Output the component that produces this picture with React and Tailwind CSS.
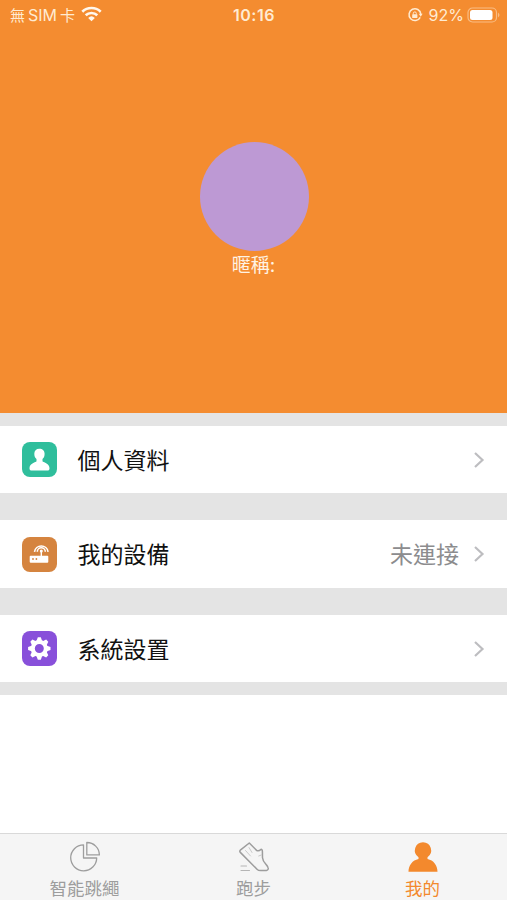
import React from 'react';

const Chevron = () => (
  <svg className="ml-[14px] mt-px h-[18px] w-[12px] shrink-0" viewBox="0 0 12 18" fill="none" stroke="#bdbdc0" strokeWidth="2.2">
    <path d="M2 2 9.5 9 2 16" />
  </svg>
);

const PersonIcon = () => (
  <svg className="h-full w-full" viewBox="0 0 35 35" fill="#fff">
    <path d="M17.3 6.700c-3.200 0-5 2-5 5 0 2.400.8 4.200 2.200 5.300v2.300c-.5 1-6.700 1.900-7 6.600-.1 2 .8 2.600 2.300 2.600h15.500c1.500 0 2.300-.7 2.200-2.600-.3-4.700-6.400-5.600-7-6.600V17c1.400-1.100 2.100-2.900 2.100-5.300 0-3-2-5-5.300-5z" />
  </svg>
);

const RouterIcon = () => (
  <svg className="h-full w-full" viewBox="0 0 35 35">
    <rect x="7.700" y="18.800" width="18.600" height="7" rx="1" fill="#fff" />
    <path d="M19.300 13.500v6" stroke="#fff" strokeWidth="1.400" />
    <circle cx="19.300" cy="13.900" r="1.500" fill="#fff" />
    <path d="M12.500 14.800a6.900 6.900 0 0 1 13.600 0M15.300 14.800a4 4 0 0 1 8 0" fill="none" stroke="#fff" strokeWidth="1.600" />
    <circle cx="11" cy="22" r="0.900" fill="#d5843f" />
    <circle cx="14.400" cy="22" r="0.900" fill="#d5843f" />
  </svg>
);

const GearIcon = () => (
  <svg className="h-full w-full" viewBox="0 0 35 35">
    <g fill="#fff" transform="translate(17.300 17.500)">
      {[0, 45, 90, 135, 180, 225, 270, 315].map((a) => (
        <path key={a} d="M-3-7-1.500-11.200H1.500L3-7z" transform={`rotate(${a})`} />
      ))}
    </g>
    <circle cx="17.300" cy="17.500" r="6.500" fill="none" stroke="#fff" strokeWidth="4" />
  </svg>
);

const Row = ({ color, icon, label, value }) => (
  <div className="flex h-[67.500px] shrink-0 items-center bg-white pl-[22px] pr-[22px]">
    <div className={`mt-px h-[35px] w-[35px] shrink-0 overflow-hidden rounded-[8px] ${color}`}>{icon}</div>
    <span className="ml-[20.500px] flex-1 pt-[3px] text-[23px] leading-[34px] text-[#111]">{label}</span>
    {value && <span className="pt-[3px] text-[23px] leading-[34px] text-[#8c8c8e]">{value}</span>}
    <Chevron />
  </div>
);

const Tab = ({ icon, label, active }) => (
  <div className={`flex flex-1 flex-col items-center pt-[6px] ${active ? 'text-[#f3892d]' : 'text-[#9d9d9d]'}`}>
    <div className="h-[34px] w-[34px]">{icon}</div>
    <span className="mt-[3px] text-[17.500px] leading-[24px]">{label}</span>
  </div>
);

export default function App() {
  return (
    <div className="flex h-[900px] w-[507px] flex-col overflow-hidden bg-white font-['Inter','Noto_Sans_CJK_TC',sans-serif]">
      <header className="flex h-[412.500px] shrink-0 flex-col items-center bg-[#f48c30]">
        <div className="grid h-[30px] w-full grid-cols-3 items-center pl-[10px] pr-[8px] text-[#ffebd2]">
          <div className="flex items-center text-[16px] leading-[20px]">
            <span className="pt-px text-[15px]">無</span>
            <span className="ml-[3px]">SIM</span>
            <span className="ml-[3px] pt-px text-[15px]">卡</span>
            <svg className="ml-[6px] h-[16px] w-[21px] -translate-y-px" viewBox="0 0 21 16" fill="none" stroke="#fff8ee" strokeWidth="2.700">
              <path d="M1.300 5.700a13.300 13.300 0 0 1 18.400 0M4.700 9.300a8.400 8.400 0 0 1 11.600 0" />
              <path d="M10.500 15.200 7.200 11.900a4.800 4.800 0 0 1 6.600 0z" fill="#fff8ee" stroke="none" />
            </svg>
          </div>
          <div className="-ml-px text-center text-[16px] font-semibold leading-[20px] tracking-[0.500px]">10:16</div>
          <div className="flex items-center justify-end">
            <svg className="h-[16px] w-[16px]" viewBox="0 0 16 16" fill="none" stroke="#ffebd2" strokeWidth="1.500">
              <path d="M13.200 10.300a5.900 5.900 0 1 1 .6-3.300" />
              <path d="m11.700 6.800 3.900 0-1.900 3z" fill="#ffebd2" stroke="none" />
              <rect x="5.200" y="7.200" width="5.200" height="3.900" rx=".6" fill="#ffebd2" stroke="none" />
              <path d="M6.300 7.500V6.400a1.500 1.500 0 0 1 3 0v1.100" strokeWidth="1" />
            </svg>
            <span className="ml-[6px] text-[16px] leading-[20px]">92%</span>
            <svg className="ml-[3px] -mr-px h-[16px] w-[33px]" viewBox="0 0 33 16">
              <rect x="1" y="1" width="28.500" height="14" rx="4.500" fill="none" stroke="#f9bc83" strokeWidth="1.200" />
              <rect x="3" y="3" width="22.500" height="10" rx="2.500" fill="#fff" />
              <path d="M31 5.500q3 2.500 0 5z" fill="#f9bc83" />
            </svg>
          </div>
        </div>
        <div className="ml-px mt-[111.500px] h-[109px] w-[109px] shrink-0 rounded-full bg-[#bd99d4]" />
        <div className="mt-[2px] text-[19px] leading-[26px] text-[#fff3e4]">暱稱:</div>
      </header>

      <main className="flex h-[282.500px] shrink-0 flex-col bg-[#e4e4e4] pt-[13px]">
        <Row color="bg-[#2fbe9c]" icon={<PersonIcon />} label="個人資料" />
        <div className="h-[27px] shrink-0" />
        <Row color="bg-[#d5843f]" icon={<RouterIcon />} label="我的設備" value="未連接" />
        <div className="h-[27px] shrink-0" />
        <Row color="bg-[#8850da]" icon={<GearIcon />} label="系統設置" />
      </main>

      <nav className="mt-auto flex h-[67px] shrink-0 border-t border-[#d9d9d9] bg-[#f5f5f5]">
        <Tab
          label="智能跳繩"
          icon={
            <svg viewBox="0 0 34 34" fill="none" stroke="currentColor" strokeWidth="1.300" strokeLinejoin="round">
              <path d="M15.500 4.800a13 13 0 1 0 13.200 13.200H15.500z" />
              <path d="M18.800 2.500v12.400h12.600A12.500 12.500 0 0 0 18.800 2.500z" />
            </svg>
          }
        />
        <Tab
          label="跑步"
          icon={
            <svg viewBox="0 0 34 34" fill="none" stroke="currentColor" strokeWidth="1.500" strokeLinecap="round" strokeLinejoin="round">
              <path d="M12.300 3 3.300 10.200Q2.300 11.300 3.300 12.400L20 29.200q1.500 1.500 3.800 1.400l5.600-.2q2.700-.6 1.500-3.200-.5-1.300-2.200-3.200-3-3.300-3.200-6.200l-.1-6.600q-.2-2.200-1.600-1.800-1.700 2-4 1.200z" />
              <path d="M8.500 10.500 13.500 16M12 7.500l3 5M21.700 16l2.600-1" stroke="#c4c4c4" strokeWidth=".9" />
              <path d="M4 26h5.500M4 30.500h8.500" stroke="#b5b5b5" strokeWidth="1.100" />
            </svg>
          }
        />
        <Tab
          active
          label="我的"
          icon={
            <svg viewBox="0 0 34 34" fill="currentColor">
              <path d="M17 2.200a8.200 8.200 0 0 0-4.500 15v1.700C6.500 20.200 2.500 25 2.500 31.700h29c0-6.700-4-11.500-10-12.800v-1.700A8.200 8.200 0 0 0 17 2.200z" />
            </svg>
          }
        />
      </nav>
    </div>
  );
}
